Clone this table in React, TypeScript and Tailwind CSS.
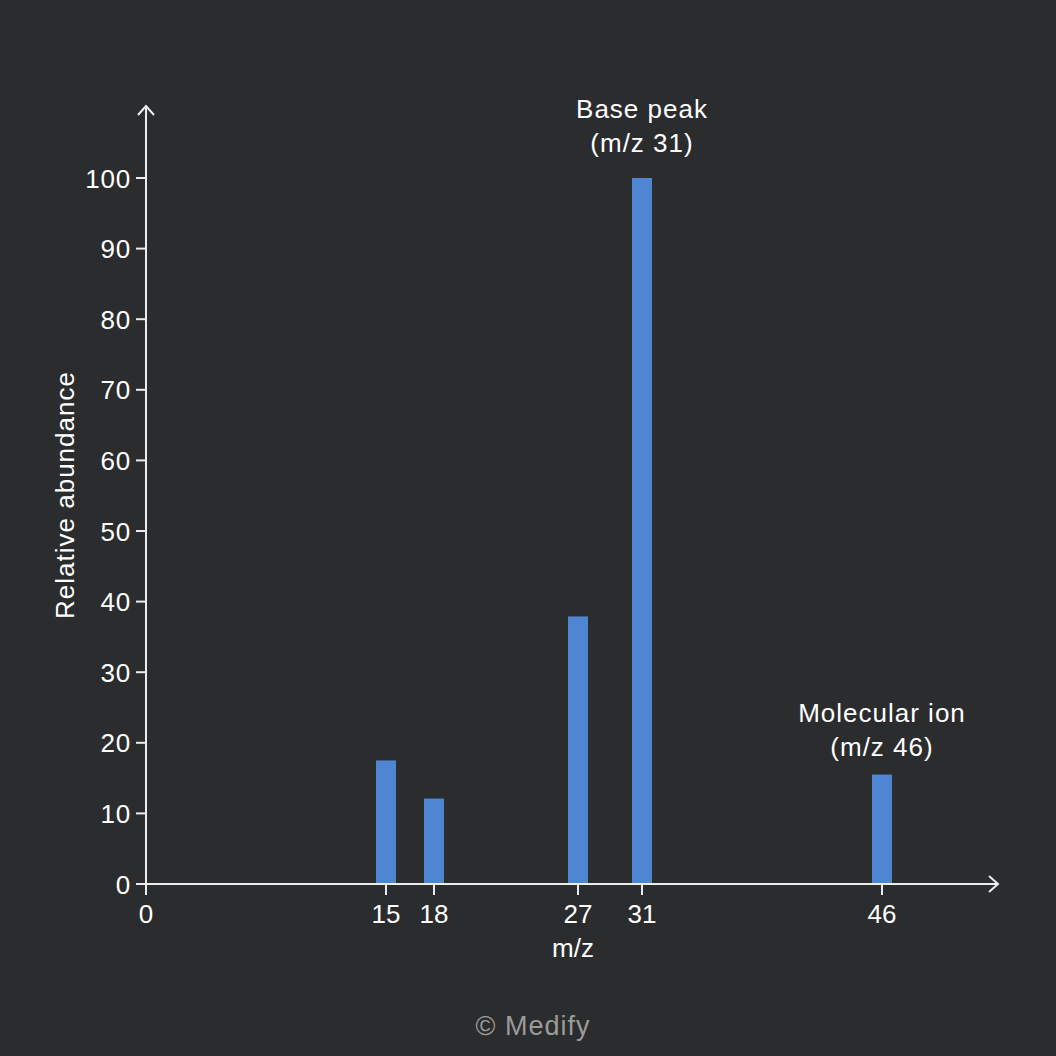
const originX = 146;
const originY = 884;
const pxPerMz = 16;
const pxPerUnit = 7.06;

const peaks = [
  { mz: 15, value: 17.5 },
  { mz: 18, value: 12.1 },
  { mz: 27, value: 37.9 },
  { mz: 31, value: 100 },
  { mz: 46, value: 15.5 },
];

const yTicks = [0, 10, 20, 30, 40, 50, 60, 70, 80, 90, 100];
const xTicks = [0, 15, 18, 27, 31, 46];

const toX = (mz: number) => originX + mz * pxPerMz;
const toY = (v: number) => originY - v * pxPerUnit;

const axisColor = "#ececec";

const MassSpectrum = () => (
  <svg
    width={1056}
    height={1013}
    viewBox="0 0 1056 1013"
    className="block"
    style={{ fontFamily: '"Liberation Sans", Arial, sans-serif' }}
  >
    {peaks.map((p) => (
      <rect
        key={p.mz}
        x={toX(p.mz) - 10}
        y={toY(p.value)}
        width={20}
        height={originY - toY(p.value)}
        fill="#4f86d4"
      />
    ))}

    {/* axes */}
    <line x1={originX} y1={895} x2={originX} y2={106} stroke={axisColor} strokeWidth={2} />
    <polyline
      points={`${originX - 8},115 ${originX},106 ${originX + 8},115`}
      fill="none"
      stroke={axisColor}
      strokeWidth={2}
    />
    <line x1={136} y1={originY} x2={998} y2={originY} stroke={axisColor} strokeWidth={2} />
    <polyline
      points={`989,876 998,${originY} 989,892`}
      fill="none"
      stroke={axisColor}
      strokeWidth={2}
    />

    {yTicks.map((t) => (
      <g key={t}>
        <line x1={136} y1={toY(t)} x2={originX} y2={toY(t)} stroke={axisColor} strokeWidth={2} />
        <text
          x={131}
          y={toY(t) + 9.5}
          textAnchor="end"
          fill="#ffffff"
          fontSize={26}
          letterSpacing={0.8}
        >
          {t}
        </text>
      </g>
    ))}

    {xTicks.map((t) => (
      <g key={t}>
        <line x1={toX(t)} y1={originY} x2={toX(t)} y2={895} stroke={axisColor} strokeWidth={2} />
        <text x={toX(t)} y={923} textAnchor="middle" fill="#ffffff" fontSize={26}>
          {t}
        </text>
      </g>
    ))}

    <text x={573} y={957} textAnchor="middle" fill="#ffffff" fontSize={26}>
      m/z
    </text>

    <text
      x={0}
      y={0}
      transform="translate(74 495) rotate(-90)"
      textAnchor="middle"
      fill="#ffffff"
      fontSize={26}
      letterSpacing={1}
    >
      Relative abundance
    </text>

    <g fill="#ffffff" fontSize={26} textAnchor="middle" letterSpacing={1}>
      <text x={642} y={117.5}>Base peak</text>
      <text x={642} y={152}>(m/z 31)</text>
      <text x={882} y={722}>Molecular ion</text>
      <text x={882} y={756}>(m/z 46)</text>
    </g>
  </svg>
);

export default function App() {
  return (
    <div className="flex h-[1056px] w-[1056px] flex-col bg-[#2b2c2e]">
      <MassSpectrum />
      <p className="pl-[10px] text-center text-[27px] leading-[26px] tracking-[1px] text-[#9b9b9b] [font-family:'Liberation_Sans',Arial,sans-serif]">
        © Medify
      </p>
    </div>
  );
}
